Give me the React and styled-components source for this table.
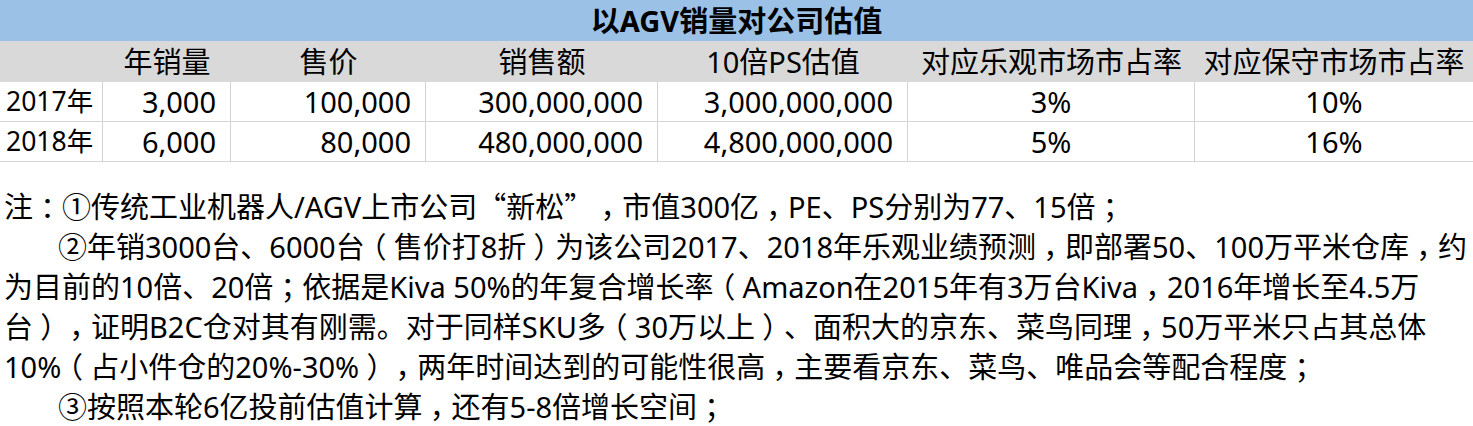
import React from "react";
import styled, { createGlobalStyle } from "styled-components";

const GlobalStyle = createGlobalStyle`
  body {
    margin: 0;
    background: #fff;
    color: #000;
    font-family: "Noto Sans", "Noto Sans CJK SC", sans-serif;
  }
`;

//DATA
const headers = ["", "年销量", "售价", "销售额", "10倍PS估值", "对应乐观市场市占率", "对应保守市场市占率"];
const rows = [
  ["2017年", "3,000", "100,000", "300,000,000", "3,000,000,000", "3%", "10%"],
  ["2018年", "6,000", "80,000", "480,000,000", "4,800,000,000", "5%", "16%"],
];
const align = ["left", "right", "right", "right", "right", "center", "center"];

const notes = [
  { text: "注：①传统工业机器人/AGV上市公司“新松”，市值300亿，PE、PS分别为77、15倍；" },
  { text: "②年销3000台、6000台（售价打8折）为该公司2017、2018年乐观业绩预测，即部署50、100万平米仓库，约", indent: true },
  { text: "为目前的10倍、20倍；依据是Kiva 50%的年复合增长率（Amazon在2015年有3万台Kiva，2016年增长至4.5万" },
  { text: "台），证明B2C仓对其有刚需。对于同样SKU多（30万以上）、面积大的京东、菜鸟同理，50万平米只占其总体" },
  { text: "10%（占小件仓的20%-30%），两年时间达到的可能性很高，主要看京东、菜鸟、唯品会等配合程度；" },
  { text: "③按照本轮6亿投前估值计算，还有5-8倍增长空间；", indent: true },
];

//full-width punctuation sits in the middle of its box, quotes hug the word
const punctuate = (text) =>
  text.split(/([，；：（）“”])/).map((part, i) => {
    if (part === "“") return <Punct key={i} $side="right">{part}</Punct>;
    if (part === "”") return <Punct key={i} $side="left">{part}</Punct>;
    if (/^[，；：（）]$/.test(part)) return <Punct key={i} $side="center">{part}</Punct>;
    return part;
  });

const App = () => {
  return (
    <>
      <GlobalStyle />
      <Sheet>
        <Title>以AGV销量对公司估值</Title>
        {headers.map((h, i) => (
          <HeadCell key={i}>{h}</HeadCell>
        ))}
        {rows.map((row, r) =>
          row.map((value, i) => (
            <Cell key={`${r}-${i}`} $align={align[i]} $last={i === row.length - 1}>
              {value}
            </Cell>
          ))
        )}
      </Sheet>
      <Notes>
        {notes.map((line, i) => (
          <Line key={i} $indent={line.indent}>
            {punctuate(line.text)}
          </Line>
        ))}
      </Notes>
    </>
  );
};

const Sheet = styled.div`
  display: grid;
  grid-template-columns: 103px 128px 195px 232px 250px 287px 278px;
  font-size: 29px;
  line-height: 1;
`;

const Title = styled.div`
  grid-column: 1 / -1;
  height: 41px;
  display: flex;
  align-items: center;
  justify-content: center;
  background: #9bc2e6;
  font-weight: bold;
`;

const HeadCell = styled.div`
  height: 41px;
  display: flex;
  align-items: center;
  justify-content: center;
  background: #d9d9d9;
  white-space: nowrap;
`;

const Cell = styled.div`
  box-sizing: border-box;
  height: 40px;
  display: flex;
  align-items: center;
  justify-content: ${(p) =>
    p.$align === "left" ? "flex-start" : p.$align === "right" ? "flex-end" : "center"};
  padding: ${(p) => (p.$align === "left" ? "0 0 0 6px" : p.$align === "right" ? "0 14px 0 0" : "0")};
  font-size: ${(p) => (p.$align === "left" ? "26.5px" : "29px")};
  border-bottom: 1px solid #d4d4d4;
  border-right: ${(p) => (p.$last ? "none" : "1px solid #d4d4d4")};
  white-space: nowrap;
`;

const Notes = styled.div`
  margin-top: 25px;
  padding-left: 4px;
  font-size: 29px;
  line-height: 40px;
  text-spacing-trim: space-all;
`;

const Line = styled.div`
  height: 40px;
  white-space: nowrap;
  padding-left: ${(p) => (p.$indent ? "54px" : "0")};
`;

const Punct = styled.span`
  display: inline-block;
  width: 1em;
  line-height: 1;
  font-family: "Noto Sans CJK SC", sans-serif;
  font-feature-settings: "halt";
  text-align: ${(p) => p.$side};
`;

export default App;
